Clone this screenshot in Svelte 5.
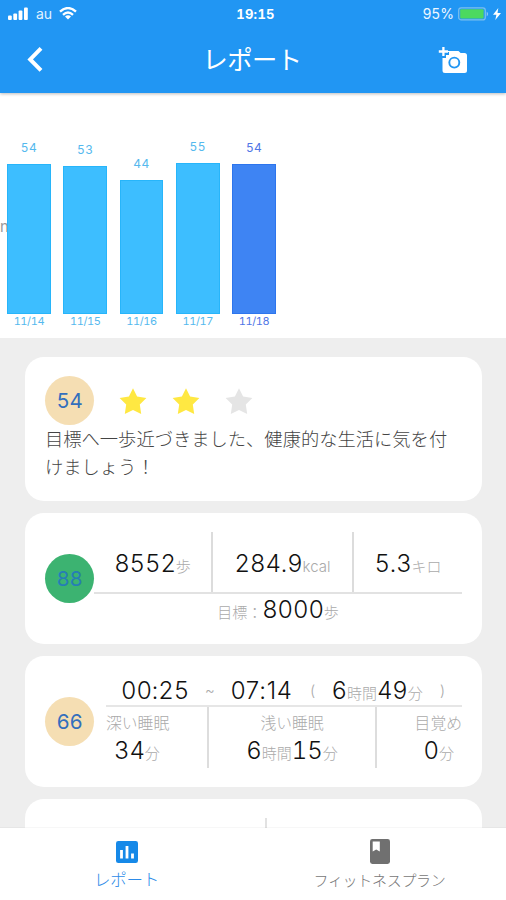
<script>
  const days = [
    { score: 54, date: '11/14', height: 149.5 },
    { score: 53, date: '11/15', height: 148 },
    { score: 44, date: '11/16', height: 134 },
    { score: 55, date: '11/17', height: 151 },
    { score: 54, date: '11/18', height: 149.5, active: true }
  ];
  const stars = [true, true, false];
</script>

{#snippet val(n, unit)}<span class="num">{n}</span><span class="unit">{unit}</span>{/snippet}

<div class="app">
  <header>
    <div class="status">
      <div class="carrier">
        <svg width="21" height="14" viewBox="0 0 21 14" fill="#fff"><rect x="0" y="8.5" width="3.8" height="4.5" rx="1"/><rect x="5.3" y="6.5" width="3.8" height="6.5" rx="1"/><rect x="10.6" y="3.5" width="3.8" height="9.5" rx="1"/><rect x="16" y="0.5" width="3.8" height="12.5" rx="1"/></svg>
        <span>au</span>
        <svg width="18" height="13" viewBox="0 0 18 13" fill="none" stroke="#fff" stroke-width="2.4"><path d="M1 4.6Q9-2.4 17 4.6"/><path d="M4 7.8Q9 3.4 14 7.8"/><path d="M9 12.6L6 9.5Q9 7.2 12 9.5Z" fill="#fff" stroke="none"/></svg>
      </div>
      <b>19:15</b>
      <div class="power">
        <span>95%</span>
        <svg width="32" height="14" viewBox="0 0 32 14"><rect x=".7" y=".9" width="26.6" height="12" rx="2.5" fill="none" stroke="#7cc0ee" stroke-width="1.2"/><rect x="2.2" y="2.2" width="23.4" height="9.4" rx="1" fill="#4cd95f"/><path d="M28.7 4.4Q31.6 6.9 28.7 9.4Z" fill="#8dc6f5"/></svg>
        <svg class="bolt" width="8" height="12" viewBox="0 0 8 12"><path d="M5.3 0L0 6.8H3.4L2.3 12L8 4.9H4.5Z" fill="#fff"/></svg>
      </div>
    </div>
    <div class="bar">
      <svg class="back" width="16" height="25" viewBox="0 0 16 25"><path d="M14 1.4L3.2 12.4L14 23.4" fill="none" stroke="#fff" stroke-width="4"/></svg>
      <h1>レポート</h1>
      <svg width="30" height="28" viewBox="0 0 30 28"><path d="M8 5H20.5L22.6 7H26.5Q29 7 29 9.5V24.5Q29 27 26.5 27H7Q4.5 27 4.5 24.5V12H8V9H11V6H8Z" fill="#fff"/><path d="M5.4 1V10M.8 5.5H10" stroke="#fff" stroke-width="2.3"/><circle cx="16.3" cy="16.6" r="5" fill="none" stroke="#2196f3" stroke-width="1.9"/></svg>
    </div>
  </header>

  <section class="chart">
    <span class="axis">n</span>
    {#each days as d}
      <div class="day" class:active={d.active}>
        <span class="score">{d.score}</span>
        <div class="column" style="height: {d.height}px"></div>
        <span class="date">{d.date}</span>
      </div>
    {/each}
  </section>

  <main>
    <article class="summary">
      <div class="top">
        <div class="badge">54</div>
        <div class="stars">
          {#each stars as on}
            <svg width="28" height="27" viewBox="0 0 28 27"><path d="M14 .3L18.1 8.5L27.4 9.9L20.8 16.5L22.2 26L14 21.9L5.8 26L7.2 16.5L.6 9.9L9.9 8.5Z" fill={on ? '#ffe842' : '#e5e5e5'}/></svg>
          {/each}
        </div>
      </div>
      <p>目標へ一歩近づきました、健康的な生活に気を付けましょう！</p>
    </article>

    <article class="steps">
      <div class="badge green">88</div>
      <div class="detail">
        <div class="totals">
          <div>{@render val('8552', '歩')}</div>
          <div>{@render val('284.9', 'kcal')}</div>
          <div>{@render val('5.3', 'キロ')}</div>
        </div>
        <div class="goal"><span class="unit">目標：</span>{@render val('8000', '歩')}</div>
      </div>
    </article>

    <article class="sleep">
      <div class="badge">66</div>
      <div class="detail">
        <div class="period">
          <span class="num from">00:25</span><span class="unit tilde">~</span><span class="num to">07:14</span><span class="unit open">(</span><span>{@render val('6', '時間')}{@render val('49', '分')}</span><span class="unit close">)</span>
        </div>
        <div class="phases">
          <div class="deep"><span class="label">深い睡眠</span><span class="line">{@render val('34', '分')}</span></div>
          <div class="light"><span class="label">浅い睡眠</span><span class="line">{@render val('6', '時間')}{@render val('15', '分')}</span></div>
          <div class="awake"><span class="label">目覚め</span><span class="line">{@render val('0', '分')}</span></div>
        </div>
      </div>
    </article>

    <article class="next"><i></i></article>
  </main>

  <nav>
    <div class="tab current">
      <svg width="22" height="22" viewBox="0 0 22 22"><rect width="22" height="22" rx="2.3" fill="#1689e8"/><path d="M5.5 9V17.5M11 5V17.5M16.5 12.5V17.5" stroke="#fff" stroke-width="2.8"/></svg>
      <span>レポート</span>
    </div>
    <div class="tab">
      <svg width="20" height="25" viewBox="0 0 20 25"><rect width="20" height="25" rx="2.4" fill="#707070"/><path d="M2.7 2.6H9.8V12.6L6.2 10.5L2.7 12.6Z" fill="#fff"/></svg>
      <span>フィットネスプラン</span>
    </div>
  </nav>
</div>

<style>
  :global(body) { margin: 0; }
  .app { width: 506px; height: 900px; display: flex; flex-direction: column; overflow: hidden; background: #fff; font-family: Inter, "Noto Sans CJK JP", sans-serif; font-variant-numeric: tabular-nums; }
  svg { display: block; flex: none; }
  header { height: 93px; flex: none; background: #2196f3; color: #fff; box-shadow: 0 1px 3px #0004; z-index: 1; }
  .status { height: 27px; display: grid; grid-template-columns: 1fr auto 1fr; align-items: center; padding: 0 5px 0 8px; box-sizing: border-box; font-size: 14px; }
  .status b { font-size: 13px; font-weight: 700; letter-spacing: .3px; transform: translateX(1px); }
  .carrier, .power { display: flex; align-items: center; }
  .carrier span { margin: 0 7px 0 7px; color: #e2f2ff; }
  .power { justify-content: flex-end; }
  .power span { margin-right: 4px; letter-spacing: -.1px; color: #eef7ff; }
  .bolt { margin-left: 3px; }
  .bar { height: 66px; display: flex; align-items: center; justify-content: space-between; padding: 0 38px 0 27px; box-sizing: border-box; }
  .back { margin-top: -1px; }
  h1 { margin: 0 0 0 23px; font-size: 25.3px; line-height: 36px; font-weight: 400; letter-spacing: -.5px; }

  .chart { height: 245px; flex: none; display: flex; align-items: flex-end; gap: 12.5px; padding: 0 7px 9px; box-sizing: border-box; position: relative; }
  .axis { position: absolute; left: 0; top: 125px; font-size: 15px; line-height: 18px; color: #999; }
  .day { width: 43.8px; display: flex; flex-direction: column; align-items: center; color: #55b9ee; font-size: 11px; position: relative; }
  .score { line-height: 14px; margin-bottom: 9px; font-size: 12px; letter-spacing: .4px; }
  .column { width: 100%; background: #3dbeff; box-shadow: inset 0 0 0 1px #27b5fa; }
  .date { line-height: 15px; padding-top: .5px; letter-spacing: -.4px; white-space: nowrap; }
  .active { color: #5076e6; }
  .active .column { background: #3e84f3; box-shadow: inset 0 0 0 1px #2d75ed; }

  main { height: 490px; flex: none; background: #eee; padding: 18.5px 24px 0 25px; box-sizing: border-box; overflow: hidden; display: flex; flex-direction: column; gap: 12.5px; }
  article { background: #fff; border-radius: 19px; box-sizing: border-box; flex: none; }
  .badge { width: 49px; height: 49px; border-radius: 50%; background: #f5deb3; color: #336fbd; display: grid; place-items: center; font-size: 20.5px; letter-spacing: -.4px; flex: none; }
  .green { background: #3cb371; color: #267db6; }
  .summary { height: 144px; padding: 19px 20px 0; }
  .top { display: flex; align-items: center; }
  .stars { display: flex; gap: 25.3px; margin: 2px 0 0 24.5px; }
  p { margin: 0; font-size: 18.3px; line-height: 28px; color: #444; font-weight: 300; width: 410px; word-break: break-all; }

  .steps, .sleep { height: 130.5px; padding: 19px 20px 0; display: flex; }
  .steps .badge, .sleep .badge { margin-top: 21.5px; }
  .num { font-size: 24px; font-weight: 300; color: #111; letter-spacing: -.1px; }
  .unit { font-size: 15px; font-weight: 300; color: #aaa; }
  .detail { flex: 1; min-width: 0; white-space: nowrap; }
  .totals { height: 62px; box-sizing: border-box; border-bottom: 2px solid #e2e2e2; display: grid; grid-template-columns: 117px 1fr 110px; line-height: 64px; text-align: center; }
  .totals div { height: 60px; }
  .totals div + div { border-left: 2px solid #dcdcdc; }
  .goal { line-height: 31px; text-align: center; }

  .sleep .detail { margin-left: 12px; }
  .period { height: 32px; line-height: 31px; border-bottom: 2px solid #e6e6e6; box-sizing: border-box; display: flex; padding-left: 15px; }
  .to { font-variant-numeric: normal; letter-spacing: .7px; }
  .tilde { margin: 0 16px 0 16px; }
  .open { margin: 0 16px 0 17px; }
  .close { margin-left: 17px; }
  .phases { height: 61px; display: grid; grid-template-columns: 101px 1fr 87px; }
  .phases div { display: flex; flex-direction: column; box-sizing: border-box; }
  .phases div + div { border-left: 2px solid #ddd; }
  .label { color: #aaa; font-size: 15.8px; line-height: 34px; height: 29px; font-weight: 300; }
  .line { line-height: 30px; height: 30px; }
  .deep .line { padding-left: 8px; }
  .light { align-items: center; }
  .awake { align-items: flex-end; }
  .awake .line { padding-right: 8px; }
  .next { height: 130px; padding-top: 19px; }
  .next i { display: block; width: 2px; height: 60px; margin-left: 240px; background: #e2e2e2; }

  nav { height: 72px; flex: none; display: flex; background: #fff; box-shadow: 0 0 1px #0003; }
  .tab { flex: 1; display: flex; flex-direction: column; align-items: center; color: #777; padding-top: 11px; font-size: 15px; font-weight: 300; }
  .tab span { line-height: 22px; margin-top: 6px; letter-spacing: -.3px; }
  .current { padding-top: 12.5px; color: #2d8be8; font-size: 16.5px; }
</style>
